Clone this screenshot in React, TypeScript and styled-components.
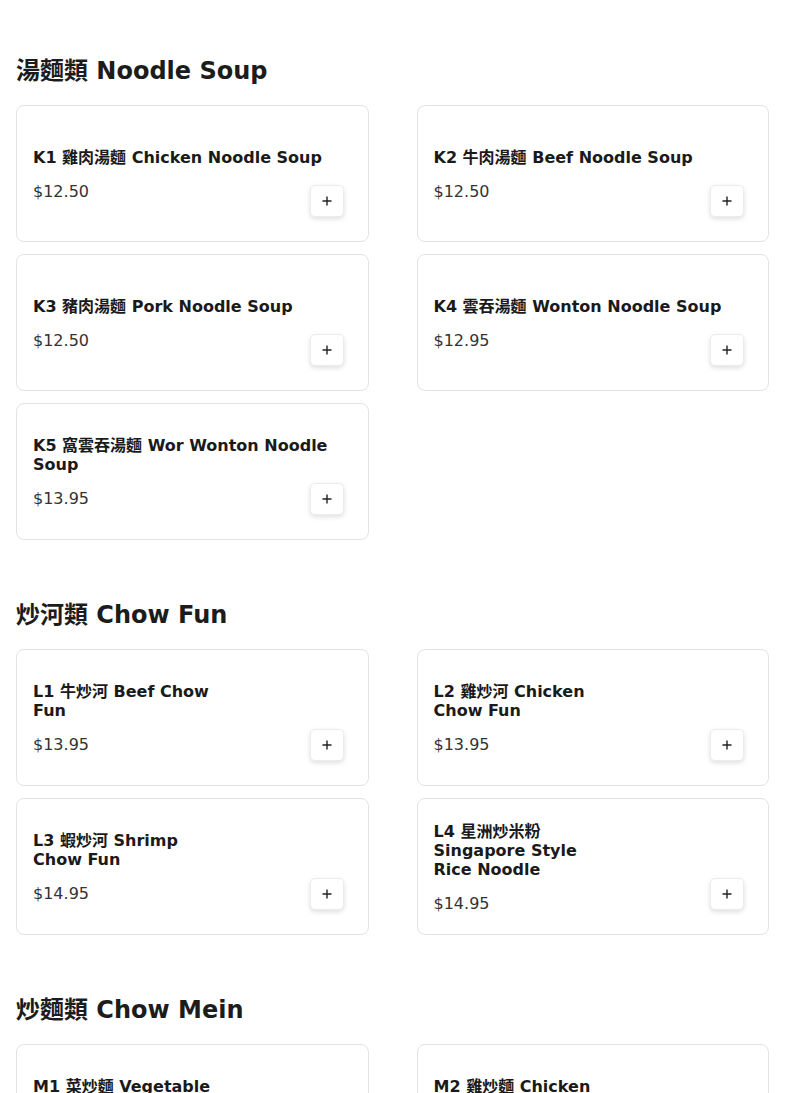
import styled, { createGlobalStyle } from "styled-components"

type Item = { code: string; zh: string; en: string; price: string; narrow?: boolean }
type Section = { zh: string; en: string; items: Item[] }

const menu: Section[] = [
    {
        zh: "湯麵類", en: "Noodle Soup", items: [
            { code: "K1", zh: "雞肉湯麵", en: "Chicken Noodle Soup", price: "$12.50" },
            { code: "K2", zh: "牛肉湯麵", en: "Beef Noodle Soup", price: "$12.50" },
            { code: "K3", zh: "豬肉湯麵", en: "Pork Noodle Soup", price: "$12.50" },
            { code: "K4", zh: "雲吞湯麵", en: "Wonton Noodle Soup", price: "$12.95" },
            { code: "K5", zh: "窩雲吞湯麵", en: "Wor Wonton Noodle Soup", price: "$13.95" },
        ]
    },
    {
        zh: "炒河類", en: "Chow Fun", items: [
            { code: "L1", zh: "牛炒河", en: "Beef Chow Fun", price: "$13.95", narrow: true },
            { code: "L2", zh: "雞炒河", en: "Chicken Chow Fun", price: "$13.95", narrow: true },
            { code: "L3", zh: "蝦炒河", en: "Shrimp Chow Fun", price: "$14.95", narrow: true },
            { code: "L4", zh: "星洲炒米粉", en: "Singapore Style Rice Noodle", price: "$14.95", narrow: true },
        ]
    },
    {
        zh: "炒麵類", en: "Chow Mein", items: [
            { code: "M1", zh: "菜炒麵", en: "Vegetable Chow Mein", price: "$12.95", narrow: true },
            { code: "M2", zh: "雞炒麵", en: "Chicken Chow Mein", price: "$13.95", narrow: true },
        ]
    },
]

export default function App() {
    return <>
        <GlobalStyle />
        <Page>
            {
                menu.map((s, i) =>
                    <MenuSection key={i}>
                        <Heading>{s.zh} {s.en}</Heading>
                        <Grid>
                            {
                                s.items.map(item =>
                                    <Card key={item.code}>
                                        <Info>
                                            <Title $narrow={item.narrow}>{item.code} {item.zh} {item.en}</Title>
                                            <Price>{item.price}</Price>
                                        </Info>
                                        <AddButton aria-label="Add">
                                            <svg width="12" height="12" viewBox="0 0 12 12">
                                                <path d="M6 1.5v9M1.5 6h9" stroke="#222" strokeWidth="1.4" />
                                            </svg>
                                        </AddButton>
                                    </Card>
                                )
                            }
                        </Grid>
                    </MenuSection>
                )
            }
        </Page>
    </>
}

const GlobalStyle = createGlobalStyle`
    body {
        margin: 0;
        background: #fff;
        font-family: "DejaVu Sans", "Noto Sans CJK TC", sans-serif;
        color: #1c1c1c;
    }
`

const Page = styled.main`
    display: flex;
    flex-direction: column;
    gap: 56px;
    padding: 52px 16px 40px;
`

const MenuSection = styled.section`
    display: flex;
    flex-direction: column;
`

const Heading = styled.h2`
    margin: 0 0 16px;
    padding-top: 1px;
    font-size: 24px;
    line-height: 36px;
    font-weight: 700;
    color: #1c1c1c;
`

const Grid = styled.div`
    display: grid;
    grid-template-columns: 1fr 1fr;
    column-gap: 48px;
    row-gap: 12px;
`

const Card = styled.article`
    position: relative;
    box-sizing: border-box;
    height: 137px;
    display: flex;
    align-items: center;
    padding: 16px;
    border: 1px solid #e3e3e3;
    border-radius: 8px;
    background: #fff;
`

const Info = styled.div`
    flex: 1;
    padding-top: 3px;
    display: flex;
    flex-direction: column;
`

const Title = styled.h3<{ $narrow?: boolean }>`
    margin: 0 0 14px;
    max-width: ${p => p.$narrow ? "180px" : "none"};
    font-size: 16px;
    line-height: 19px;
    font-weight: 700;
    color: #1a1a1a;
`

const Price = styled.span`
    font-size: 16px;
    line-height: 22px;
    color: #333;
`

const AddButton = styled.button`
    position: absolute;
    right: 24px;
    bottom: 24px;
    width: 34px;
    height: 32px;
    display: flex;
    align-items: center;
    justify-content: center;
    padding: 0;
    border: 1px solid #ececec;
    border-radius: 5px;
    background: #fff;
    box-shadow: 0 2px 5px rgba(0, 0, 0, 0.13);
    cursor: pointer;
`
